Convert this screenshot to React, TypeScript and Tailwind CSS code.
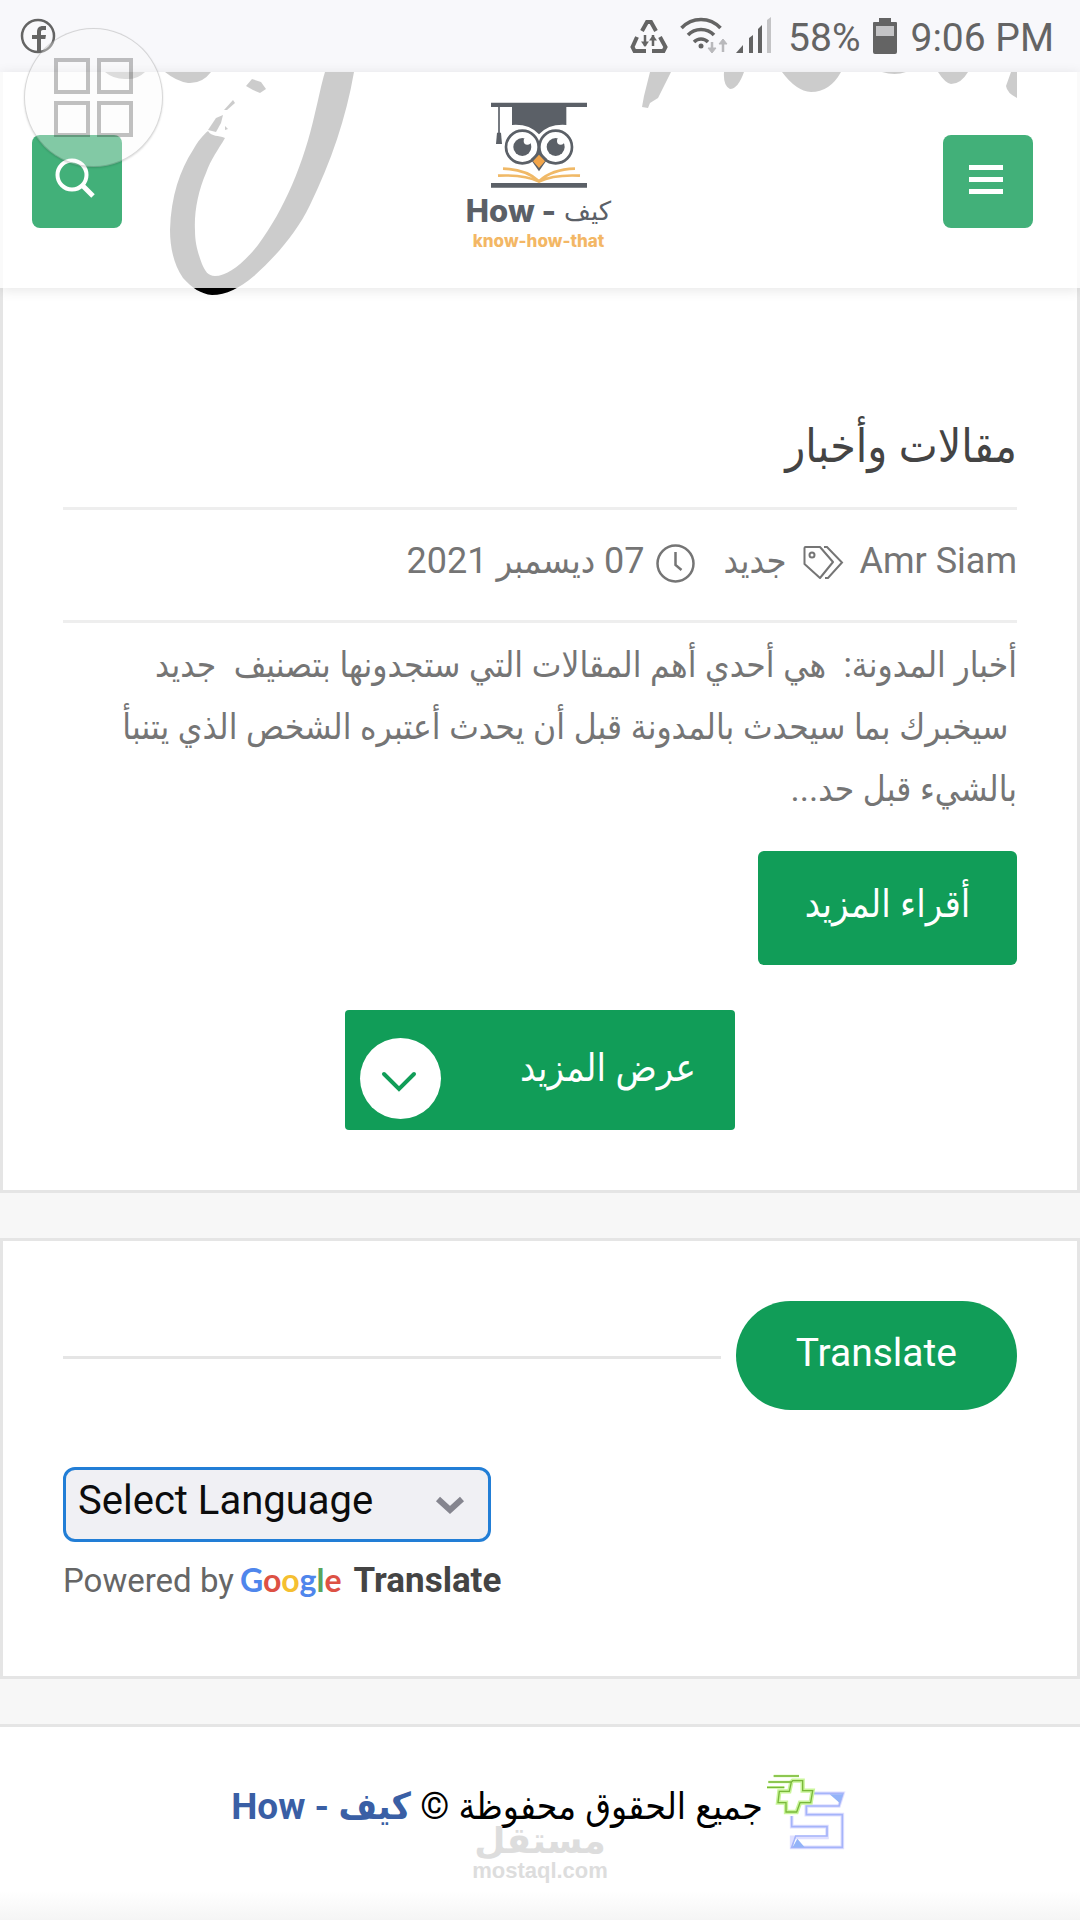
import React from "react";

const SANS = "font-[Roboto,'DejaVu_Sans_Condensed','DejaVu_Sans',sans-serif]";

function StatusBar() {
  return (
    <div dir="ltr" className="flex h-[72px] items-center justify-between bg-[#f8f8fb] pl-5 pr-[26px] text-[#646464]">
      <svg width="36" height="36" viewBox="0 0 36 36" aria-label="Facebook">
        <circle cx="18" cy="18" r="16" fill="none" stroke="currentColor" strokeWidth="2.5" />
        <path d="M17 34V21h-5v-4h5v-3c0-4 2-6 6-6h3v4h-3c-1.500 0-2 .7-2 2v3h5l-.7 4H21v13z" fill="currentColor" />
      </svg>
      <div className="flex items-center gap-3">
        <svg width="38" height="36" viewBox="0 0 38 36" fill="none" stroke="currentColor" strokeWidth="4">
          <path d="M12 13 17 4h4l5 9" />
          <path d="M7 19 2.500 29l2 4H16M30 19l5.500 10-2 4H22" />
          <path d="M15 17v11M23 28V17" strokeWidth="2.500" />
          <path d="M11 23.500 15 29l4-5.500zM19 22.500 23 17l4 5.500z" fill="currentColor" stroke="none" />
        </svg>
        <svg width="48" height="38" viewBox="0 0 48 38" fill="none" stroke="currentColor" strokeWidth="3.500">
          <path d="M1.500 11C12-.5 30-.5 40.500 11M8 18c7-7.500 19-7.500 26 0M14 25c4-4 10-4 14 0" />
          <circle cx="21" cy="29" r="2.500" fill="currentColor" stroke="none" />
          <g stroke="#b9b9bc" strokeWidth="2.500">
            <path d="M32 25v8M43 35V25" />
            <path d="M28 31l4 5 4-5zM39 27l4-5 4 5z" fill="#b9b9bc" strokeWidth="1" />
          </g>
        </svg>
        <svg width="36" height="38" viewBox="0 0 36 38" fill="currentColor" className="-ml-1">
          <path d="M0 36l7-8v8zM13 21l4-3v18h-4zM22 12l4-4v28h-4z" />
          <path d="M31 3l4-3v36h-4z" fill="#c4c4c6" />
        </svg>
        <span className="ml-1 pt-1 text-[39px] leading-[68px]">58%</span>
        <svg width="26" height="36" viewBox="0 0 26 36" fill="currentColor">
          <path d="M7 0h12v4h5q1 0 1 1v29q0 2-2 2H3q-2 0-2-2V5q0-1 1-1h5z" />
          <path d="M4 8h18v10H4z" fill="#c4c4c6" />
        </svg>
        <span className="pt-1 text-[39px] leading-[68px]">9:06 PM</span>
      </div>
    </div>
  );
}

function FloatingButton() {
  return (
    <button
      type="button"
      aria-label="Apps"
      className="absolute left-6 top-[28px] z-30 flex h-[139px] w-[139px] items-center justify-center rounded-full border border-black/15 bg-[#f9f9f9]/35 shadow-[0_1px_2px_rgba(0,0,0,0.15)]"
    >
      <svg width="80" height="80" viewBox="0 0 80 80" fill="none" stroke="#000" strokeOpacity=".24" strokeWidth="4">
        <rect x="2" y="2" width="32" height="32" />
        <rect x="45" y="2" width="32" height="32" />
        <rect x="2" y="45" width="32" height="32" />
        <rect x="45" y="45" width="32" height="32" />
      </svg>
    </button>
  );
}

function OwlMark() {
  return (
    <svg width="96" height="87" viewBox="153 36 288 261" aria-hidden="true">
      <path d="M153 38h288v13H153zM153 279h288v14H153z" fill="#5b6067" />
      <path d="M216 50h163v55q-52-4-82 28-30-32-81-28z" fill="#5b6067" />
      <path d="M177 50v82" stroke="#5b6067" strokeWidth="5" />
      <path d="M171 128h12l3 34h-18z" fill="#5b6067" />
      <path d="M189 236q70 2 108 38 38-36 108-38M174 257q80-4 123 18 43-22 123-18" fill="none" stroke="#f0b967" strokeWidth="8" />
      <circle cx="247" cy="171" r="49" fill="#fff" stroke="#5b6067" strokeWidth="8" />
      <circle cx="347" cy="171" r="49" fill="#fff" stroke="#5b6067" strokeWidth="8" />
      <path d="M272 208l25 36 25-36-25-24z" fill="#5b6067" />
      <path d="M297 194l18 20-18 20-18-20z" fill="#f2a54a" />
      <circle cx="247" cy="171" r="27" fill="#5b6067" />
      <circle cx="347" cy="171" r="27" fill="#5b6067" />
      <circle cx="262" cy="153" r="11" fill="#fff" />
      <circle cx="362" cy="153" r="11" fill="#fff" />
    </svg>
  );
}

function Header() {
  return (
    <header dir="ltr" className="relative z-20 flex h-[216px] justify-between bg-white/80 pl-8 pr-[47px] shadow-[0_2px_12px_rgba(0,0,0,0.1)]">
      <button type="button" aria-label="Search" className="mt-[63px] flex h-[93px] w-[90px] items-center justify-center rounded-lg bg-[#42b079]">
        <svg width="40" height="40" viewBox="0 0 40 40" fill="none" stroke="#fff" strokeWidth="4" className="mb-2 mr-1">
          <circle cx="17" cy="17" r="14.500" />
          <path d="M27 27l11 11" strokeWidth="5" />
        </svg>
      </button>
      <a href="#home" className="ml-3 mt-[30px] flex flex-col items-center">
        <OwlMark />
        <span className="flex gap-2 whitespace-nowrap font-[Inter,'DejaVu_Sans',sans-serif] text-[31px] font-extrabold leading-[44px] text-[#5b6067]">
          How - <span dir="rtl" className="font-['DejaVu_Sans',sans-serif] text-[26px] font-normal">كيف</span>
        </span>
        <span className="font-[Inter,sans-serif] text-[17px] font-extrabold leading-[16px] text-[#f3b765]">know-how-that</span>
      </a>
      <button type="button" aria-label="Menu" className="mt-[63px] flex h-[93px] w-[90px] items-center justify-center rounded-lg bg-[#42b079]">
        <svg width="36" height="30" viewBox="0 0 36 30" fill="#fff" className="mb-1 mr-1">
          <path d="M1 0h34v5H1zM1 12h34v5H1zM1 24h34v5H1z" />
        </svg>
      </button>
    </header>
  );
}

function BrushArt() {
  return (
    <svg width="1080" height="240" viewBox="0 72 1080 240" className="absolute -left-[3px] top-0" aria-hidden="true">
      <path d="M325 72h29C346 118 331 162 310 205c-14 29-35 52-56 71-14 12-28 19-42 19-11-1-20-7-29-17-9-13-13-30-13-48 1-34 10-60 23-80 5-9 10-15 15-19 4 6 10 4 17 7-7 12-14 21-19 35-8 18-12 40-11 57 0 14 3 23 7 34 3 7 6 12 13 12 12 0 27-11 43-31 26-35 46-82 57-132 4-16 6-28 10-41z" />
      <path d="M105 72h40q-8 8-20 7-12 0-20-7zM165 72h46q-9 12-23 11-12-2-23-11z" />
      <path d="M246 86l6-7 9 3 5 7-6 4-7-3zM224 110l9-10 2 3-8 7z" />
      <path d="M208 130l8-12 7-3-2 8-5 9z" />
      <path d="M225 126l3 3-3 1z" />
      <path d="M650 72h21l-6 12-7 14-8 5-2 5-6-1 2-11zM724 72h20q-6 17-14 17-7-3-6-17zM782 72h59q-11 20-30 20-15-1-29-20zM882 72h24q-11 4-24 0zM938 72h30q-7 12-17 12-6-1-13-12zM1011 72h6v26q-10-5-11-12z" />
    </svg>
  );
}

function Article() {
  return (
    <section className="relative -mt-[216px] border-[3px] border-t-0 border-[#e5e5e5] bg-white px-[60px] pb-[60px] pt-[344px]">
      <BrushArt />
      <h2 className="text-[46px] leading-[60px] text-[#444]">مقالات وأخبار</h2>
      <div className="mt-[31px] flex h-[116px] items-center border-y-[3px] border-[#eee] pb-2 text-[36px] text-[#757575]">
        <span>Amr Siam</span>
        <svg width="41" height="34" viewBox="0 0 41 34" fill="none" stroke="currentColor" strokeWidth="2" className="mr-4 mt-1">
          <path d="M1.500 2q0-1 1-1H17l13 15-13 16L1.500 18z" strokeLinejoin="round" />
          <path d="M21 1h3l15 15.500L25 32h-3" />
          <circle cx="9" cy="9" r="2.500" />
        </svg>
        <a href="#new" className="mr-4">جديد</a>
        <svg width="39" height="39" viewBox="0 0 39 39" fill="none" stroke="currentColor" strokeWidth="2.500" className="mr-7 mt-1">
          <circle cx="19.500" cy="19.500" r="18" />
          <path d="M19.500 8v13l6 5" />
        </svg>
        <time className="mr-3 whitespace-pre">07 ديسمبر 2021</time>
      </div>
      <p className="mt-[12px] text-[35px] leading-[62px] text-[#757575]">
        أخبار المدونة:&nbsp; هي أحدي أهم المقالات التي ستجدونها بتصنيف&nbsp; جديد
        <br />
        &nbsp;سيخبرك بما سيحدث بالمدونة قبل أن يحدث أعتبره الشخص الذي يتنبأ
        <br />
        بالشيء قبل حد...
      </p>
      <a href="#article" className="mt-[30px] flex h-[114px] w-[259px] items-center justify-center rounded-md bg-[#119d58] pb-2 text-[38px] text-white">
        أقراء المزيد
      </a>
      <button type="button" className="mx-auto mt-[45px] flex h-[120px] w-[390px] items-center justify-between rounded bg-[#119d58] pl-[15px] pr-[39px] text-[38px] text-white">
        <span className="pb-1">عرض المزيد</span>
        <span className="mt-4 flex h-[81px] w-[81px] items-center justify-center rounded-full bg-white">
          <svg width="36" height="22" viewBox="0 0 36 22" fill="none" stroke="#119d58" strokeWidth="4" strokeLinecap="round" className="mr-1 mt-2">
            <path d="M3 3l15 15L33 3" />
          </svg>
        </span>
      </button>
    </section>
  );
}

function TranslateCard() {
  return (
    <section dir="ltr" className="mt-[45px] border-[3px] border-[#e5e5e5] bg-white px-[60px] pb-[72px] pt-[60px]">
      <div className="flex items-center gap-[15px]">
        <div className="mt-1 h-[3px] grow bg-[#e5e5e5]" />
        <h3 className="rounded-full bg-[#119d58] px-[60px] pb-1 text-[39px] leading-[105px] text-white">Translate</h3>
      </div>
      <div className="relative mt-[57px] w-[428px]">
        <select
          aria-label="Select Language"
          className="h-[75px] w-full appearance-none rounded-xl border-[3px] border-[#227ed6] bg-[#f0f0f4] pb-2 pl-3 text-[40px] leading-[60px] text-[#0c0c0d]"
        >
          <option>Select Language</option>
        </select>
        <svg width="30" height="20" viewBox="0 0 30 20" fill="none" stroke="#85858f" strokeWidth="6" className="pointer-events-none absolute right-[26px] top-[29px]">
          <path d="M3 3l12 11L27 3" />
        </svg>
      </div>
      <div className="mt-[14px] flex h-[48px] items-baseline leading-[48px]">
        <span className="text-[33px] text-[#666]">Powered by</span>
        <a href="#google-translate" className="ml-1.5 flex items-baseline">
          <span className="font-[Lato,sans-serif] text-[32px] font-bold text-[#4f86ec]">
            G<span className="text-[#dd5144]">o</span><span className="text-[#f5bf31]">o</span>g<span className="text-[#58a55c]">l</span><span className="text-[#dd5144]">e</span>
          </span>
          <span className="ml-3 text-[35px] font-bold text-[#444]">Translate</span>
        </a>
      </div>
    </section>
  );
}

function SiteIcon() {
  return (
    <svg width="82" height="80" viewBox="88 68 246 240" fill="none" className="shrink-0" aria-hidden="true">
      <path d="M228 132h88l-12 38h-98v26h108v98H162v-30h106v-32H162v-32" stroke="#e0e0ff" strokeWidth="11" />
      <path d="M228 132h88l-12 38h-98v26h108v98H162l12-34h94v-28H162v-32" stroke="#a5b4fa" strokeWidth="5" />
      <path d="M276 135h40l-10 26zM165 294l14-26 22 26z" fill="#94b4f8" />
      <path d="M165 94h30v30h30l-6 36h-32l-10 28h-32v-28h-24l4-34h30l6-28z" stroke="#c9f59a" strokeWidth="13" />
      <path d="M108 80h76M92 98h70M88 114h52" stroke="#c9f59a" strokeWidth="8" />
      <path d="M165 94h30v30h30l-6 36h-32l-10 28h-32v-28h-24l4-34h30l6-28zM108 80h76M92 98h70M88 114h52" stroke="#79b83a" strokeWidth="4" />
    </svg>
  );
}

function Footer() {
  return (
    <footer className="mt-[45px] grow border-t-[3px] border-[#e5e5e5] bg-gradient-to-b from-white from-85% to-[#f5f5f5] pt-[45px]">
      <div className="flex justify-center text-[37px] leading-[46px] text-black">
        <SiteIcon />
        <p className="mr-1 pt-3">
          جميع الحقوق محفوظة ©{" "}
          <a href="#home" className="font-bold text-[#3a5fa5]">
            كيف - <span dir="ltr">How</span>
          </a>
        </p>
      </div>
      <div dir="ltr" className="-mt-[30px] flex flex-col items-center text-[#ddd]">
        <span dir="rtl" className="font-['DejaVu_Sans',sans-serif] text-[36px] font-bold leading-[38px]">مستقل</span>
        <span className="font-['Liberation_Sans',sans-serif] text-[22px] font-bold leading-[22px]">mostaql.com</span>
      </div>
    </footer>
  );
}

export default function App() {
  return (
    <div dir="rtl" className={`relative flex min-h-screen flex-col overflow-hidden bg-[#f7f7f7] ${SANS}`}>
      <StatusBar />
      <FloatingButton />
      <Header />
      <main>
        <Article />
        <TranslateCard />
      </main>
      <Footer />
    </div>
  );
}
